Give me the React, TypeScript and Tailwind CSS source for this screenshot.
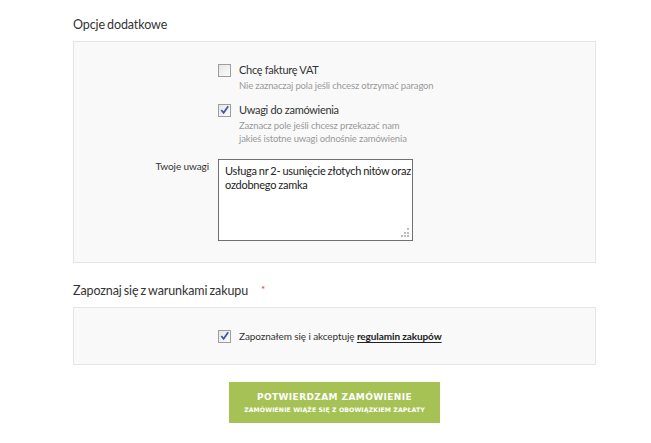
import React from "react";

function Box({ checked }: { checked?: boolean }) {
  return (
    <div className="w-[13px] h-[13px] shrink-0 border border-[#9d9d9d] bg-gradient-to-br from-[#e6e6e6] to-[#fbfbfb] relative">
      {checked && (
        <svg viewBox="0 0 13 13" className="absolute left-[0px] top-[-1px] w-[12px] h-[12px]">
          <path d="M2.5 6.5 L5 9.5 L10 2.5" fill="none" stroke="#3b55a0" strokeWidth="1.8" />
        </svg>
      )}
    </div>
  );
}

export default function App() {
  return (
    <div className="w-[651px] h-[443px] bg-white text-[#333] [font-family:Lato,'Liberation_Sans',sans-serif]">
      <div className="ml-[73px] w-[523px] pt-[16px]">
        <div className="text-[12.5px] leading-[18px] h-[18px] tracking-[-0.1px] [word-spacing:-1px]">Opcje dodatkowe</div>
        <div className="mt-[7px] border border-[#e5e5e5] bg-[#f9f9f9] pt-[22px] pb-[21px]">
          <div className="flex">
            <div className="w-[144px] shrink-0" />
            <div>
              <div className="flex gap-[8px] items-start">
                <Box />
                <div className="text-[11px] leading-[14px] -mt-[1px] tracking-[-0.3px]">Chcę fakturę VAT</div>
              </div>
              <div className="ml-[21px] mt-[2px] text-[9.5px] leading-[13px] text-[#999] tracking-[-0.15px]">
                Nie zaznaczaj pola jeśli chcesz otrzymać paragon
              </div>
              <div className="flex gap-[8px] items-start mt-[12px]">
                <Box checked />
                <div className="text-[11px] leading-[14px] -mt-[1px] tracking-[-0.3px]">Uwagi do zamówienia</div>
              </div>
              <div className="ml-[21px] mt-[2px] text-[9.5px] leading-[13px] text-[#999] tracking-[-0.15px]">
                Zaznacz pole jeśli chcesz przekazać nam
                <br />
                jakieś istotne uwagi odnośnie zamówienia
              </div>
            </div>
          </div>
          <div className="flex mt-[14px]">
            <div className="w-[144px] shrink-0 pr-[9px] text-right text-[10px] leading-[14px] tracking-[-0.1px]">Twoje uwagi</div>
            <div className="relative w-[195px] h-[82px] border border-[#707070] bg-white pl-[6px] pr-[1px] pt-[4px] text-[11px] leading-[14px] tracking-[-0.25px] [word-spacing:-0.5px] text-[#222]">
              Usługa nr 2- usunięcie złotych nitów oraz ozdobnego zamka
              <svg viewBox="0 0 12 12" className="absolute right-[1px] bottom-[1px] w-[12px] h-[12px]">
                <rect x="8" y="1" width="2" height="2" fill="#bbb" />
                <rect x="5" y="5" width="2" height="2" fill="#bbb" />
                <rect x="8" y="5" width="2" height="2" fill="#bbb" />
                <rect x="2" y="8" width="2" height="2" fill="#bbb" />
                <rect x="5" y="8" width="2" height="2" fill="#bbb" />
                <rect x="8" y="8" width="2" height="2" fill="#bbb" />
              </svg>
            </div>
          </div>
        </div>

        <div className="mt-[19px] text-[12.5px] leading-[18px] h-[18px] flex tracking-[-0.1px] [word-spacing:-1px]">
          <span>Zapoznaj się z warunkami zakupu</span>
          <span className="ml-[13px] text-[#d9382e] text-[10px] leading-[14px]">*</span>
        </div>
        <div className="mt-[7px] border border-[#e5e5e5] bg-[#f9f9f9] h-[58px] flex items-center">
          <div className="w-[144px] shrink-0" />
          <div className="flex gap-[8px] items-center">
            <Box checked />
            <div className="text-[10px] leading-[14px] tracking-[-0.1px]">
              Zapoznałem się i akceptuję{" "}
              <span className="font-bold underline underline-offset-2 text-[#222]">regulamin zakupów</span>
            </div>
          </div>
        </div>

        <div className="mt-[17px] flex justify-center">
          <div className="w-[211px] h-[41px] bg-[#a6c255] flex flex-col items-center justify-center text-white font-bold [font-family:'DejaVu_Sans',sans-serif]">
            <div className="text-[9px] leading-[12px] tracking-[0.4px]">POTWIERDZAM ZAMÓWIENIE</div>
            <div className="text-[6.2px] leading-[9px] mt-[2px] tracking-[0.1px]">ZAMÓWIENIE WIĄŻE SIĘ Z OBOWIĄZKIEM ZAPŁATY</div>
          </div>
        </div>
      </div>
    </div>
  );
}
